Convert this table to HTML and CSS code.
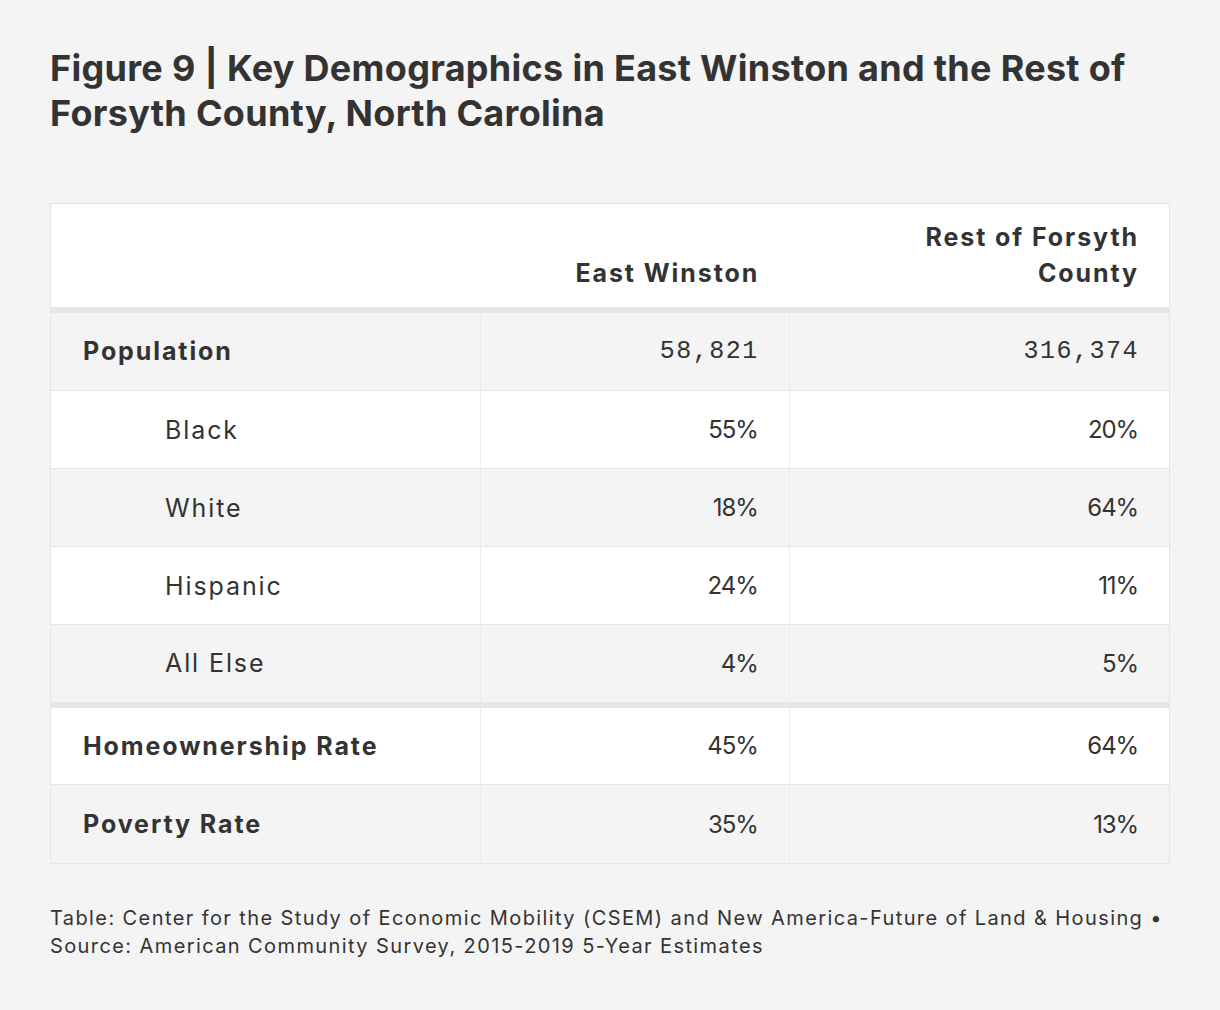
FILE: index.html
```html
<!DOCTYPE html>
<html lang="en">
<head>
<meta charset="utf-8">
<title>Figure 9</title>
<link rel="stylesheet" href="styles.css">
</head>
<body>
<main class="figure">
  <h1 class="title">Figure 9 | Key Demographics in East Winston and the Rest of Forsyth County, North Carolina</h1>
  <table class="data">
    <colgroup>
      <col class="c1"><col class="c2"><col class="c3">
    </colgroup>
    <thead>
      <tr>
        <th class="blank"></th>
        <th class="colhead">East Winston</th>
        <th class="colhead">Rest of Forsyth<br>County</th>
      </tr>
    </thead>
    <tbody>
      <tr class="odd first">
        <td class="label strong">Population</td>
        <td class="num mono">58,821</td>
        <td class="num mono">316,374</td>
      </tr>
      <tr class="even">
        <td class="label indent">Black</td>
        <td class="num">55%</td>
        <td class="num">20%</td>
      </tr>
      <tr class="odd">
        <td class="label indent">White</td>
        <td class="num">18%</td>
        <td class="num">64%</td>
      </tr>
      <tr class="even">
        <td class="label indent">Hispanic</td>
        <td class="num">24%</td>
        <td class="num">11%</td>
      </tr>
      <tr class="odd group-end">
        <td class="label indent">All Else</td>
        <td class="num">4%</td>
        <td class="num">5%</td>
      </tr>
      <tr class="even after-group">
        <td class="label strong">Homeownership Rate</td>
        <td class="num">45%</td>
        <td class="num">64%</td>
      </tr>
      <tr class="odd last">
        <td class="label strong">Poverty Rate</td>
        <td class="num">35%</td>
        <td class="num">13%</td>
      </tr>
    </tbody>
  </table>
  <p class="source">Table: Center for the Study of Economic Mobility (CSEM) and New America-Future of Land &amp; Housing •<br>Source: American Community Survey, 2015-2019 5-Year Estimates</p>
</main>
</body>
</html>
```
FILE: styles.css
```css
html, body {
  margin: 0;
  padding: 0;
  background: #f4f4f4;
}
body {
  font-family: Inter, "Noto Sans", "Liberation Sans", sans-serif;
  color: #333333;
}
.figure {
  padding: 46px 50px 0 50px;
}
.title {
  margin: 0;
  font-size: 36px;
  line-height: 45px;
  font-weight: 700;
  letter-spacing: 0.3px;
  color: #333333;
  max-width: 1110px;
}
.data {
  margin-top: 67px;
  width: 1120px;
  border-collapse: collapse;
  border: 1px solid #e4e4e4;
  table-layout: fixed;
}
.c1 { width: 430px; }
.c2 { width: 308px; }
.c3 { width: 380px; }
thead tr {
  background: #ffffff;
  border-bottom: 6px solid #e6e6e6;
}
th {
  height: 106px;
  padding: 0 30px 16px 30px;
  box-sizing: border-box;
  vertical-align: bottom;
  text-align: right;
  font-weight: 700;
  font-size: 25px;
  line-height: 36px;
  letter-spacing: 1.9px;
}
td {
  height: 78px;
  box-sizing: border-box;
  padding: 0 30px;
  font-size: 25px;
  letter-spacing: 1.9px;
  border-bottom: 1px solid #e6e6e6;
  border-left: 1px solid #ececec;
  vertical-align: middle;
}
td:first-child { border-left: none; }
tr.odd { background: #f4f4f4; }
tr.even { background: #ffffff; }
tr.first td { height: 81px; }
tr.group-end td { border-bottom: 6px solid #e6e6e6; height: 80px; }
tr.after-group td { height: 80px; }
tr.last td { height: 79px; }
.label { padding-left: 32px; text-align: left; }
.strong { font-weight: 700; }
.indent { padding-left: 114px; }
.num {
  text-align: right;
  font-size: 24px;
  letter-spacing: -1.1px;
  padding-right: 31px;
}
.mono {
  font-family: "Liberation Mono", monospace;
  font-size: 25px;
  letter-spacing: 1.5px;
  padding-right: 30px;
}
.source {
  margin: 40px 0 0 0;
  font-size: 20px;
  line-height: 28px;
  letter-spacing: 1.4px;
  color: #333333;
}
```
